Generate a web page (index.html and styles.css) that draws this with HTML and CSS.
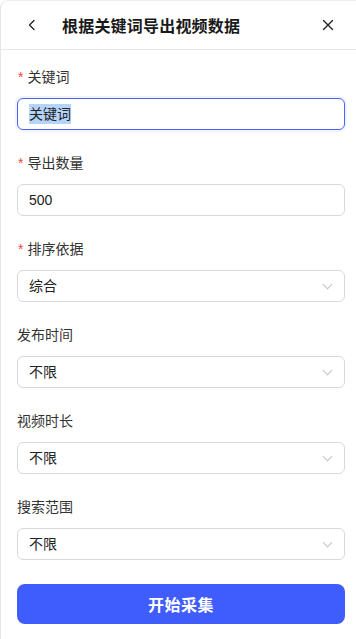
FILE: index.html
```html
<!DOCTYPE html>
<html lang="zh-CN">
<head>
  <meta charset="UTF-8">
  <meta name="viewport" content="width=device-width, initial-scale=1.0">
  <title>根据关键词导出视频数据</title>
  <link rel="stylesheet" href="styles.css">
</head>
<body>

<div class="panel">

  <!-- Header -->
  <header class="header">
    <span class="icon-btn back">
      <svg width="14" height="14" viewBox="0 0 14 14"><path d="M9 2.5 L4.5 7 L9 11.5" fill="none" stroke="#222" stroke-width="1.3" stroke-linecap="round" stroke-linejoin="round"/></svg>
    </span>
    <h1 class="title">根据关键词导出视频数据</h1>
    <span class="icon-btn close">
      <svg width="14" height="14" viewBox="0 0 14 14"><path d="M2.5 2.5 L11.5 11.5 M11.5 2.5 L2.5 11.5" fill="none" stroke="#222" stroke-width="1.4" stroke-linecap="round"/></svg>
    </span>
  </header>

  <!-- Form -->
  <div class="form">
    <div class="item">
      <label class="label"><span class="req">*</span>关键词</label>
      <div class="field focused"><span class="sel">关键词</span></div>
    </div>

    <div class="item">
      <label class="label"><span class="req">*</span>导出数量</label>
      <div class="field">500</div>
    </div>

    <div class="item">
      <label class="label"><span class="req">*</span>排序依据</label>
      <div class="field select">综合<span class="arrow"></span></div>
    </div>

    <div class="item">
      <label class="label">发布时间</label>
      <div class="field select">不限<span class="arrow"></span></div>
    </div>

    <div class="item">
      <label class="label">视频时长</label>
      <div class="field select">不限<span class="arrow"></span></div>
    </div>

    <div class="item">
      <label class="label">搜索范围</label>
      <div class="field select">不限<span class="arrow"></span></div>
    </div>

    <button class="submit">开始采集</button>
  </div>

</div>

</body>
</html>
```

FILE: styles.css
```css
html, body {
  margin: 0;
  padding: 0;
  background: #ffffff;
}

body {
  font-family: "Liberation Sans", "Noto Sans CJK SC", sans-serif;
  color: #333;
}

.panel {
  min-height: 639px;
  box-sizing: border-box;
  border-left: 1px solid #e6e6e6;
  border-top: 1px solid #eeeeee;
  border-top-left-radius: 8px;
  background: #fff;
}

.header {
  height: 48px;
  display: flex;
  align-items: center;
  border-bottom: 1px solid #e8e8e8;
  padding: 0 19px 0 22px;
}

.icon-btn {
  display: flex;
  align-items: center;
  justify-content: center;
  width: 18px;
  height: 18px;
}

.title {
  flex: 1;
  margin: 0 0 0 21px;
  font-size: 16px;
  font-weight: bold;
  color: #1a1a1a;
  letter-spacing: 0.2px;
}

.form {
  padding: 16px 11px 0 16px;
}

.item {
  margin-bottom: 22px;
}

.label {
  display: block;
  height: 22px;
  line-height: 22px;
  font-size: 14px;
  color: #333;
  margin-bottom: 10px;
}

.req {
  color: #f5483b;
  margin-right: 4px;
  margin-left: 1px;
}

.field {
  position: relative;
  height: 32px;
  box-sizing: border-box;
  border: 1px solid #d9d9d9;
  border-radius: 6px;
  padding: 0 11px;
  line-height: 30px;
  font-size: 14px;
  color: #222;
}

.field.focused {
  border-color: #4a63f5;
  box-shadow: 0 0 0 2px rgba(74, 99, 245, 0.08);
}

.sel {
  background: #b4d4fb;
  padding: 2px 0;
}

.arrow {
  position: absolute;
  right: 13px;
  top: 10px;
  width: 6px;
  height: 6px;
  border-right: 1px solid #c4c4c4;
  border-bottom: 1px solid #c4c4c4;
  transform: rotate(45deg);
}

.submit {
  display: block;
  width: 100%;
  height: 40px;
  margin-top: 24px;
  border: none;
  border-radius: 8px;
  background: #3f5dfd;
  color: #fff;
  font-family: inherit;
  font-size: 16px;
  font-weight: bold;
  letter-spacing: 0.5px;
  cursor: pointer;
}
```
